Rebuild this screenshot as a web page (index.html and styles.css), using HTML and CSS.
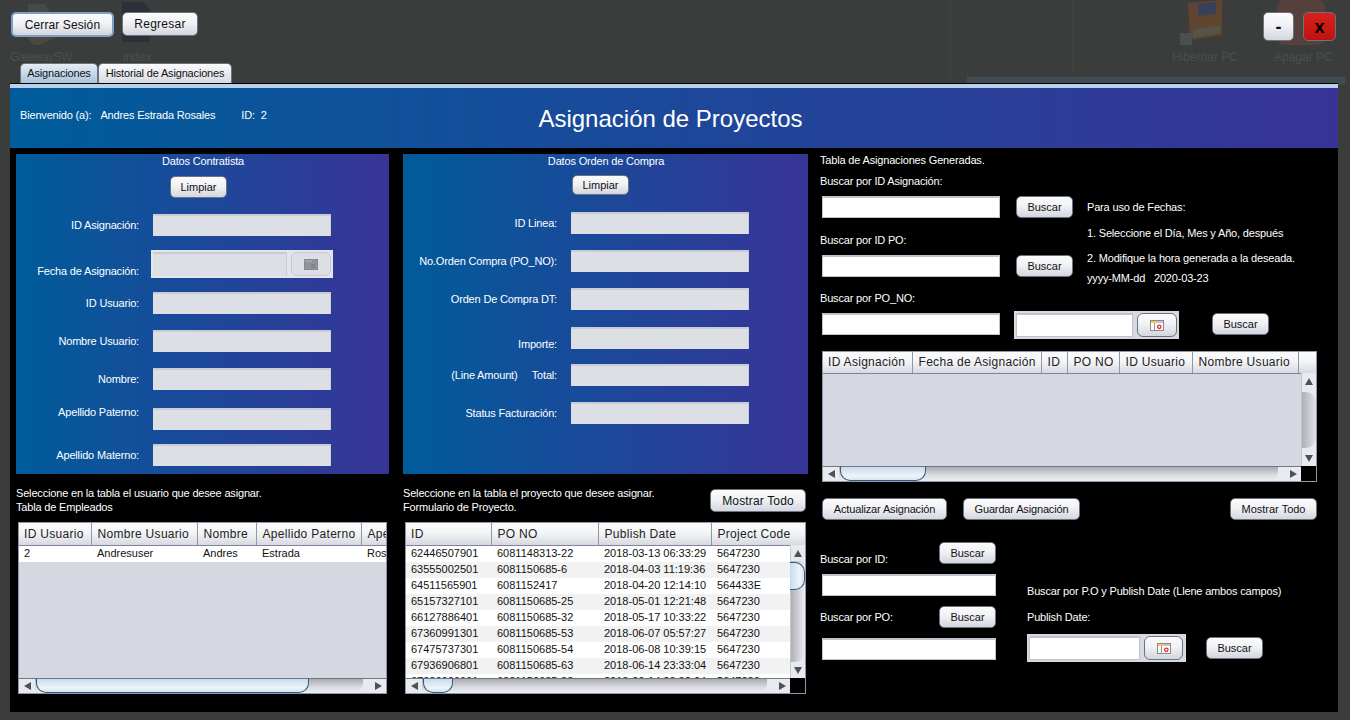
FILE: index.html
```html
<!DOCTYPE html>
<html lang="es">
  <head>
    <meta charset="utf-8" />
    <meta name="viewport" content="width=device-width, initial-scale=1" />
    <title>Asignación de Proyectos</title>
    <link rel="stylesheet" href="styles.css">
  </head>
  <body>
    <!-- desktop behind the window, very faint -->
    <svg class="desk-icons" width="1350" height="84" viewBox="0 0 1350 84">
      <path d="M950 0V80M968 0V77M1073 0V77" stroke="#434542" fill="none"/>
      <path d="M24 34L40 26H55V38L40 45H34Z" fill="#4b483c"/>
      <path d="M28 4H45L50 12V28H28Z" fill="#444a4a"/>
      <path d="M122 2H143L150 10V42H122Z" fill="#2f2e3b"/>
      <path d="M1188 3L1222 0V35L1190 40Z" fill="#5f4430"/>
      <path d="M1198 4L1216 2V14L1198 16Z" fill="#3a3f5a"/>
      <path d="M1193 30L1220 25V33L1193 38Z" fill="#555448"/>
      <rect x="1180" y="33" width="12" height="12" fill="#4b4f50"/>
      <rect x="1277" y="0" width="48" height="45" rx="7" fill="#55403c"/>
    </svg>
    <div class="desk-item desk-gateway">GatewaySW</div>
    <div class="desk-item desk-index">index</div>
    <div class="desk-item desk-hibernar">Hibernar PC</div>
    <div class="desk-item desk-apagar">Apagar PC</div>
    <div class="desk-strip"></div>

    <div class="window">
      <div class="topbar">
        <div class="topbar-left">
          <button class="btn btn-logout">Cerrar Sesión</button>
          <button class="btn btn-back">Regresar</button>
        </div>
        <div class="topbar-right">
          <button class="btn btn-min">-</button>
          <button class="btn btn-close">x</button>
        </div>
      </div>

      <div class="tabs">
        <div class="tab tab-active">Asignaciones</div>
        <div class="tab">Historial de Asignaciones</div>
      </div>

      <div class="frame">
        <header class="head">
          <div class="welcome">
            <span>Bienvenido (a):</span>
            <span>Andres Estrada Rosales</span>
            <span class="welcome-id">ID:&nbsp; 2</span>
          </div>
          <h1>Asignación de Proyectos</h1>
        </header>

        <div class="content">
          <!-- columna 1 -->
          <section class="col">
            <div class="panel panel-user">
              <p class="panel-title">Datos Contratista</p>
              <button class="btn btn-clear">Limpiar</button>
              <div class="fields">
                <div class="row"><label>ID Asignación:</label><input class="field" disabled /></div>
                <div class="row row-date">
                  <label class="lbl-low">Fecha de Asignación:</label>
                  <div class="chooser chooser-off">
                    <input class="field" disabled />
                    <button class="btn cal-btn" disabled>
                      <svg width="14" height="11" viewBox="0 0 14 11"><rect x="0.5" y="0.5" width="13" height="10" fill="#8f9296" stroke="#84878b"/><rect x="1" y="1" width="7" height="2" fill="#a0a3a6"/><circle cx="9" cy="7" r="1.5" fill="none" stroke="#75787c"/></svg>
                    </button>
                  </div>
                </div>
                <div class="row"><label>ID Usuario:</label><input class="field" disabled /></div>
                <div class="row"><label>Nombre Usuario:</label><input class="field" disabled /></div>
                <div class="row"><label>Nombre:</label><input class="field" disabled /></div>
                <div class="row"><label class="lbl-high">Apellido Paterno:</label><input class="field" disabled /></div>
                <div class="row"><label>Apellido Materno:</label><input class="field" disabled /></div>
              </div>
            </div>

            <div class="table-head">
              <p>Seleccione en la tabla el usuario que desee asignar.<br />Tabla de Empleados</p>
            </div>

            <div class="grid-box grid-users">
              <div class="grid-view">
                <table>
                  <colgroup><col class="u1" /><col class="u2" /><col class="u3" /><col class="u4" /><col class="u5" /></colgroup>
                  <thead><tr><th>ID Usuario</th><th>Nombre Usuario</th><th>Nombre</th><th>Apellido Paterno</th><th>Apellido Materno</th></tr></thead>
                  <tbody><tr><td>2</td><td>Andresuser</td><td>Andres</td><td>Estrada</td><td>Rosales</td></tr></tbody>
                </table>
              </div>
              <div class="hscroll">
                <span class="arrow arrow-left"></span>
                <span class="track"><span class="thumb thumb-h thumb-users"></span></span>
                <span class="arrow arrow-right"></span>
              </div>
            </div>
          </section>

          <!-- columna 2 -->
          <section class="col">
            <div class="panel panel-po">
              <p class="panel-title">Datos Orden de Compra</p>
              <button class="btn btn-clear">Limpiar</button>
              <div class="fields">
                <div class="row"><label>ID Linea:</label><input class="field" disabled /></div>
                <div class="row"><label>No.Orden Compra (PO_NO):</label><input class="field" disabled /></div>
                <div class="row"><label>Orden De Compra DT:</label><input class="field" disabled /></div>
                <div class="row"><label class="lbl-low2">Importe:</label><input class="field" disabled /></div>
                <div class="row"><label>(Line Amount) &nbsp; &nbsp; Total:</label><input class="field" disabled /></div>
                <div class="row"><label>Status Facturación:</label><input class="field" disabled /></div>
              </div>
            </div>

            <div class="table-head">
              <p>Seleccione en la tabla el proyecto que desee asignar.<br />Formulario de Proyecto.</p>
              <button class="btn btn-all">Mostrar Todo</button>
            </div>

            <div class="grid-box grid-po">
              <div class="grid-main">
                <div class="grid-view">
                  <table>
                    <colgroup><col class="p1" /><col class="p2" /><col class="p3" /><col class="p4" /></colgroup>
                    <thead><tr><th>ID</th><th>PO NO</th><th>Publish Date</th><th>Project Code</th></tr></thead>
                    <tbody>
                      <tr><td>62446507901</td><td>6081148313-22</td><td>2018-03-13 06:33:29</td><td>5647230</td></tr>
                      <tr><td>63555002501</td><td>6081150685-6</td><td>2018-04-03 11:19:36</td><td>5647230</td></tr>
                      <tr><td>64511565901</td><td>6081152417</td><td>2018-04-20 12:14:10</td><td>564433E</td></tr>
                      <tr><td>65157327101</td><td>6081150685-25</td><td>2018-05-01 12:21:48</td><td>5647230</td></tr>
                      <tr><td>66127886401</td><td>6081150685-32</td><td>2018-05-17 10:33:22</td><td>5647230</td></tr>
                      <tr><td>67360991301</td><td>6081150685-53</td><td>2018-06-07 05:57:27</td><td>5647230</td></tr>
                      <tr><td>67475737301</td><td>6081150685-54</td><td>2018-06-08 10:39:15</td><td>5647230</td></tr>
                      <tr><td>67936906801</td><td>6081150685-63</td><td>2018-06-14 23:33:04</td><td>5647230</td></tr>
                      <tr><td>67936906901</td><td>6081150685-33</td><td>2018-06-14 23:33:04</td><td>5647280</td></tr>
                    </tbody>
                  </table>
                </div>
                <div class="vscroll vscroll-po">
                  <span class="arrow arrow-up"></span>
                  <span class="track"><span class="thumb thumb-v"></span></span>
                  <span class="arrow arrow-down"></span>
                </div>
              </div>
              <div class="grid-foot">
                <div class="hscroll">
                  <span class="arrow arrow-left"></span>
                  <span class="track"><span class="thumb thumb-h thumb-po"></span></span>
                  <span class="arrow arrow-right"></span>
                </div>
                <div class="corner"></div>
              </div>
            </div>
          </section>

          <!-- columna 3 -->
          <section class="col-right">
            <p class="line">Tabla de Asignaciones Generadas.</p>
            <div class="find-top">
              <div>
                <p class="line line-a">Buscar por ID Asignación:</p>
                <div class="find-row find-a"><input class="field field-on" /><button class="btn btn-find">Buscar</button></div>
                <p class="line line-b">Buscar por ID PO:</p>
                <div class="find-row find-b"><input class="field field-on" /><button class="btn btn-find">Buscar</button></div>
              </div>
              <div class="notes">
                <p>Para uso de Fechas:</p>
                <p class="note-2">1. Seleccione el Día, Mes y Año, después</p>
                <p class="note-3">2. Modifique la hora generada a la deseada.</p>
                <p class="note-4">yyyy-MM-dd &nbsp; &nbsp;2020-03-23</p>
              </div>
            </div>
            <p class="line line-c">Buscar por PO_NO:</p>
            <div class="find-row find-c">
              <input class="field field-on" />
              <div class="chooser chooser-top">
                <input class="field field-on" />
                <button class="btn cal-btn">
                  <svg width="14" height="11" viewBox="0 0 14 11"><rect x="0.5" y="0.5" width="13" height="10" fill="#fbfbf8" stroke="#8d8a7e"/><rect x="1" y="1" width="7" height="2" fill="#efc56c"/><rect x="8" y="1" width="5" height="2" fill="#b4c6ee"/><path d="M4.5 3V10" stroke="#9a9a94"/><circle cx="9.3" cy="6.8" r="1.7" fill="none" stroke="#e0333a" stroke-width="1.3"/></svg>
                </button>
              </div>
              <button class="btn btn-find btn-find-c">Buscar</button>
            </div>

            <div class="grid-box grid-asig">
              <div class="grid-main">
                <div class="grid-view">
                  <table>
                    <colgroup><col class="a1" /><col class="a2" /><col class="a3" /><col class="a4" /><col class="a5" /><col class="a6" /><col class="a7" /></colgroup>
                    <thead><tr><th>ID Asignación</th><th>Fecha de Asignación</th><th>ID</th><th>PO NO</th><th>ID Usuario</th><th>Nombre Usuario</th><th></th></tr></thead>
                  </table>
                </div>
                <div class="vscroll vscroll-asig">
                  <span class="arrow arrow-up"></span>
                  <span class="track"><span class="thumb thumb-v thumb-gray"></span></span>
                  <span class="arrow arrow-down"></span>
                </div>
              </div>
              <div class="grid-foot">
                <div class="hscroll">
                  <span class="arrow arrow-left"></span>
                  <span class="track"><span class="thumb thumb-h thumb-asig"></span></span>
                  <span class="arrow arrow-right"></span>
                </div>
                <div class="corner"></div>
              </div>
            </div>

            <div class="actions">
              <button class="btn btn-update">Actualizar Asignación</button>
              <button class="btn btn-save">Guardar Asignación</button>
              <button class="btn btn-all-r">Mostrar Todo</button>
            </div>

            <div class="bottom">
              <div class="bottom-left">
                <div class="b-head"><p class="line b-label-id">Buscar por ID:</p><button class="btn btn-find">Buscar</button></div>
                <input class="field field-on field-wide" />
                <div class="b-head b-head-po"><p class="line">Buscar por PO:</p><button class="btn btn-find">Buscar</button></div>
                <input class="field field-on field-wide" />
              </div>
              <div class="bottom-right">
                <p class="line">Buscar por P.O y Publish Date (Llene ambos campos)</p>
                <p class="line line-pub">Publish Date:</p>
                <div class="pub-row">
                  <div class="chooser chooser-pub">
                    <input class="field field-on" />
                    <button class="btn cal-btn">
                      <svg width="14" height="11" viewBox="0 0 14 11"><rect x="0.5" y="0.5" width="13" height="10" fill="#fbfbf8" stroke="#8d8a7e"/><rect x="1" y="1" width="7" height="2" fill="#efc56c"/><rect x="8" y="1" width="5" height="2" fill="#b4c6ee"/><path d="M4.5 3V10" stroke="#9a9a94"/><circle cx="9.3" cy="6.8" r="1.7" fill="none" stroke="#e0333a" stroke-width="1.3"/></svg>
                    </button>
                  </div>
                  <button class="btn btn-find">Buscar</button>
                </div>
              </div>
            </div>
          </section>
        </div>
      </div>
    </div>
  </body>
</html>
```

FILE: styles.css
```css
* {
  box-sizing: border-box;
}

html,
body {
  margin: 0;
  height: 720px;
  overflow: hidden;
}

body {
  position: relative;
  background-color: #3a3d3b;
  font-family: "Liberation Sans", Arial, sans-serif;
  font-size: 11px;
  letter-spacing: -0.17px;
  color: #fff;
}

p {
  margin: 0;
}

label {
  white-space: nowrap;
}

/* things on the desktop, seen through the window */
.desk-icons {
  position: absolute;
  left: 0;
  top: 0;
}

.desk-item {
  position: absolute;
  top: 50px;
  color: #4c4f4e;
  font-size: 12px;
  letter-spacing: 0;
}

.desk-gateway { left: 10px; letter-spacing: -0.5px; }
.desk-index { left: 123px; }
.desk-hibernar { left: 1172px; }
.desk-apagar { left: 1274px; }

.desk-strip {
  position: absolute;
  left: 967px;
  top: 77px;
  width: 378px;
  height: 8px;
  background-color: #3f4c52;
}

.window {
  position: relative;
  padding-left: 10px;
  width: 1338px;
}

/* top buttons */
.topbar {
  display: flex;
  justify-content: space-between;
  height: 63px;
  padding-top: 12px;
}

.topbar-left {
  display: flex;
  gap: 8px;
  margin-left: 1px;
  align-items: flex-start;
}

.topbar-right {
  display: flex;
  gap: 9px;
  margin-right: 2px;
  align-items: flex-start;
}

.btn {
  font-family: "Liberation Sans", Arial, sans-serif;
  font-size: 11px;
  color: #111;
  padding: 0;
  border: 1px solid #6b7280;
  border-radius: 5px;
  background: linear-gradient(#fbfbfc, #f1f2f5 45%, #d3d6df);
  cursor: pointer;
}

.btn-logout {
  width: 103px;
  height: 25px;
  font-size: 12px;
  letter-spacing: 0.1px;
  border: 2px solid #7c9fc9;
}

.btn-back {
  width: 76px;
  height: 24px;
  font-size: 12px;
  letter-spacing: 0.25px;
}

.btn-min,
.btn-close {
  width: 31px;
  height: 29px;
  font-size: 18px;
  line-height: 18px;
  font-weight: bold;
}

.btn-close {
  width: 33px;
  background: linear-gradient(#d9201a, #bd1410);
  color: #000;
}

.tabs {
  display: flex;
  height: 20px;
  margin-left: 10px;
}

.tab {
  height: 20px;
  line-height: 19px;
  width: 134px;
  text-align: center;
  color: #111;
  background: linear-gradient(#fbfbfc, #d7dae2);
  border: 1px solid #6b7280;
  border-bottom: 0;
  border-radius: 5px 5px 0 0;
}

.tab-active {
  background: linear-gradient(#e5edf5, #a9c3dc);
  width: 78px;
}

/* main frame */
.frame {
  border-top: 1px solid #000;
  height: 629px;
  background-color: #000;
}

.head {
  height: 64px;
  border-top: 4px solid #b8d0e8;
  background: linear-gradient(90deg, #005c9b, #383497);
  position: relative;
}

.welcome {
  display: flex;
  padding: 20px 0 0 10px;
  gap: 9px;
  line-height: 14px;
}

.welcome-id {
  margin-left: 17px;
}

.head h1 {
  position: absolute;
  left: 0;
  right: 7px;
  top: 16px;
  margin: 0;
  text-align: center;
  font-size: 24px;
  line-height: 30px;
  letter-spacing: 0;
  font-weight: normal;
  color: #fff;
}

.content {
  display: grid;
  grid-template-columns: 373px 405px 1fr;
  column-gap: 14px;
  padding: 6px 6px 0;
}

.col-right {
  margin: -1px 0 0 -2px;
}

/* gradient panels */
.panel {
  height: 320px;
  background: linear-gradient(90deg, #005c9b, #383497);
  text-align: center;
}

.panel-title {
  line-height: 14px;
  height: 15px;
  margin-left: 1px;
}

.btn-clear {
  display: block;
  height: 22px;
  width: 57px;
  margin: 7px auto 0;
}

.panel-user .btn-clear {
  margin-left: 154px;
}

.panel-po .btn-clear {
  margin-left: 169px;
  margin-top: 6px;
  height: 20px;
}

.fields {
  display: flex;
  flex-direction: column;
  gap: 16px;
  text-align: right;
}

.panel-user .fields {
  margin-top: 16px;
}

.panel-po .fields {
  margin-top: 17px;
}

.row {
  display: grid;
  grid-template-columns: 123px 178px;
  column-gap: 14px;
  align-items: center;
  height: 22px;
}

.panel-po .row {
  grid-template-columns: 154px 178px;
}

.panel-user .row-date {
  height: 28px;
  margin-top: -2px;
  margin-bottom: -2px;
  grid-template-columns: 123px 182px;
  column-gap: 12px;
}

.lbl-low { padding-top: 14px; }
.lbl-low2 { padding-top: 12px; }
.lbl-high { padding-bottom: 14px; }

.field {
  display: block;
  width: 178px;
  height: 22px;
  padding: 0;
  margin: 0;
  border: 0;
  border-top: 2px solid #c9ccd2;
  border-right: 1px solid #c9ccd2;
  background-color: #dcdfe4;
  outline: none;
}

.field-on {
  background-color: #fff;
  border-top: 2px solid #bfc3cb;
  border-left: 1px solid #bfc3cb;
  border-right: 1px solid #bfc3cb;
  border-bottom: 1px solid #bfc3cb;
}

.chooser {
  display: flex;
  gap: 4px;
  padding: 2px;
  height: 28px;
  background-color: #d6d9e0;
}

.chooser .field {
  height: 24px;
}

.chooser-off {
  background-color: #e2e5ea;
}

.chooser-off .field {
  width: 134px;
}

.cal-btn {
  display: flex;
  align-items: center;
  justify-content: center;
  width: 40px;
  height: 24px;
  border-radius: 6px;
}

.chooser-off .cal-btn {
  background: #dcdfe4;
  border-color: #c5c8ce;
}

/* tables */
.table-head {
  display: flex;
  justify-content: space-between;
  height: 48px;
  line-height: 14px;
  padding-top: 12px;
}

.table-head .btn-all {
  width: 96px;
  height: 23px;
  margin: 3px 2px 0 0;
  font-size: 12px;
  letter-spacing: 0.15px;
}

.grid-box {
  border: 1px solid #8f97a8;
  background-color: #d5d8e1;
  color: #111;
  overflow: hidden;
}

.grid-users {
  width: 369px;
  height: 172px;
  margin-left: 2px;
}

.grid-po {
  width: 401px;
  height: 172px;
  margin-left: 2px;
}

.grid-asig {
  width: 495px;
  height: 131px;
  margin: 12px 0 0 2px;
}

.grid-view {
  overflow: hidden;
  height: 155px;
}

.grid-main {
  position: relative;
  height: 155px;
}

.grid-foot {
  display: flex;
}

.grid-foot .hscroll {
  flex: 1;
  min-width: 0;
}

.grid-asig .grid-main,
.grid-asig .grid-view {
  height: 114px;
}

table {
  border-collapse: collapse;
  table-layout: fixed;
}

.grid-users table { width: 395px; }
.grid-po table { width: 399px; }
.grid-asig table { width: 493px; }

.u1 { width: 72px; }
.u2 { width: 106px; }
.u3 { width: 59px; }
.u4 { width: 105px; }
.u5 { width: 53px; }

.p1 { width: 85px; }
.p2 { width: 107px; }
.p3 { width: 113px; }
.p4 { width: 94px; }

.a1 { width: 89px; }
.a2 { width: 129px; }
.a3 { width: 26px; }
.a4 { width: 52px; }
.a5 { width: 73px; }
.a6 { width: 106px; }
.a7 { width: 18px; }

th {
  height: 22px;
  padding: 0 0 0 5px;
  text-align: left;
  font-weight: normal;
  font-size: 12px;
  letter-spacing: 0.3px;
  white-space: nowrap;
  overflow: hidden;
  color: #222;
  background: linear-gradient(#fbfbfc, #f3f4f6 45%, #d6d9e1);
  border-right: 1px solid #8f97a8;
  border-bottom: 1px solid #7d8698;
}

.grid-asig th {
  height: 21px;
}

th:last-child {
  border-right: 0;
}

td {
  height: 16px;
  padding: 0 0 1px 5px;
  line-height: 15px;
  letter-spacing: 0;
  white-space: nowrap;
  overflow: hidden;
  background-color: #fff;
}

th + th,
td + td {
  padding-left: 6px;
}

tbody tr:nth-child(even) td {
  background-color: #f2f2f2;
}

/* scrollbars */
.hscroll {
  display: flex;
  height: 15px;
  background-color: #e8eaef;
  border-top: 1px solid #6f7686;
}

.hscroll .track {
  flex: 1;
  min-width: 0;
  position: relative;
  margin-right: 7px;
  border-radius: 0 0 10px 0;
  background: linear-gradient(#a9abb2, #dcdde2 60%, #eceef1);
}

.arrow {
  flex: none;
  display: flex;
  align-items: center;
  justify-content: center;
  width: 16px;
  height: 14px;
}

.arrow::before {
  content: "";
  width: 0;
  height: 0;
  border: 4px solid transparent;
}

.arrow-left::before {
  border-right: 7px solid #4d5158;
  border-left: 0;
}

.arrow-right::before {
  border-left: 7px solid #4d5158;
  border-right: 0;
}

.arrow-up::before {
  border-bottom: 7px solid #4d5158;
  border-top: 0;
}

.arrow-down::before {
  border-top: 7px solid #4d5158;
  border-bottom: 0;
}

.thumb {
  position: absolute;
  display: block;
}

.thumb-h {
  top: -1px;
  height: 15px;
  border: 1px solid #36597f;
  border-top: 1px solid #6f7686;
  border-radius: 0 0 10px 10px;
  background: linear-gradient(#c6dcec, #eef4f9 70%, #d5e3ee);
}

.thumb-users { left: 1px; width: 273px; }
.thumb-po { left: 1px; width: 30px; }
.thumb-asig { left: 1px; width: 86px; }

/* sits over the table body, below its header */
.vscroll {
  position: absolute;
  right: 0;
  bottom: 0;
  display: flex;
  flex-direction: column;
  width: 15px;
  background-color: #e8eaef;
  border-left: 1px solid #c3c7cf;
}

.vscroll-po {
  top: 22px;
}

.vscroll-asig {
  top: 21px;
}

.vscroll .arrow {
  width: 14px;
  height: 16px;
}

.vscroll .track {
  flex: 1;
  position: relative;
  border-radius: 0 0 10px 0;
  background: linear-gradient(90deg, #aeb0b6, #d4d5da 60%, #eceef1);
}

.vscroll-asig .track {
  background: #e8eaef;
}

.vscroll-po .thumb-v {
  left: -1px;
  right: 0;
  top: 1px;
  height: 28px;
  border: 1px solid #36597f;
  border-left: 0;
  border-radius: 0 10px 10px 0;
  background: linear-gradient(90deg, #c6dcec, #eef4f9 70%, #d5e3ee);
}

.thumb-gray {
  left: 0;
  right: 0;
  top: 3px;
  height: 56px;
  border-radius: 0 10px 10px 0;
  background: linear-gradient(90deg, #aeb0b8, #e2e3e8);
}

.corner {
  flex: none;
  width: 15px;
  background-color: #000;
}

/* right column */
.line {
  line-height: 14px;
}

.find-top {
  display: flex;
}

.line-a { margin-top: 7px; }
.line-b { margin-top: 15px; }
.line-c { margin-top: 6px; }

.find-row {
  display: flex;
  gap: 16px;
  margin-left: 2px;
}

.find-a { margin-top: 8px; }
.find-b { margin-top: 8px; }

.btn-find {
  flex: none;
  width: 57px;
  height: 22px;
}

.notes {
  margin-left: 14px;
  padding-top: 33px;
  line-height: 14px;
}

.note-2 { margin-top: 12px; }
.note-3 { margin-top: 11px; }
.note-4 { margin-top: 6px; word-spacing: -0.7px; }

.find-c {
  margin-top: 8px;
  align-items: flex-start;
}

.chooser-top {
  margin-top: -2px;
  margin-left: -2px;
  width: 165px;
}

.chooser-top .field {
  width: 117px;
}

.btn-find-c {
  margin-left: 17px;
}

.actions {
  display: flex;
  margin: 16px 0 0 2px;
  width: 495px;
}

.actions .btn {
  height: 22px;
}

.btn-update { width: 125px; letter-spacing: -0.15px; }
.btn-save { width: 117px; margin-left: 16px; letter-spacing: -0.15px; }
.btn-all-r { width: 87px; margin-left: auto; }

.bottom {
  display: flex;
  margin-top: 22px;
}

.bottom-left {
  width: 176px;
}

.b-head {
  display: flex;
  justify-content: space-between;
}

.b-label-id {
  padding-top: 10px;
}

.b-head-po {
  margin-top: 10px;
  align-items: center;
}

.field-wide {
  width: 174px;
  margin: 8px 0 0 2px;
}

.b-head-po + .field-wide {
  margin-top: 10px;
}

.bottom-right {
  margin-left: 31px;
  padding-top: 42px;
}

.line-pub {
  margin-top: 12px;
}

.pub-row {
  display: flex;
  gap: 20px;
  align-items: center;
  margin-top: 10px;
}

.chooser-pub {
  width: 159px;
}

.chooser-pub .field {
  width: 111px;
}

.chooser-pub .cal-btn {
  width: 39px;
}
```
